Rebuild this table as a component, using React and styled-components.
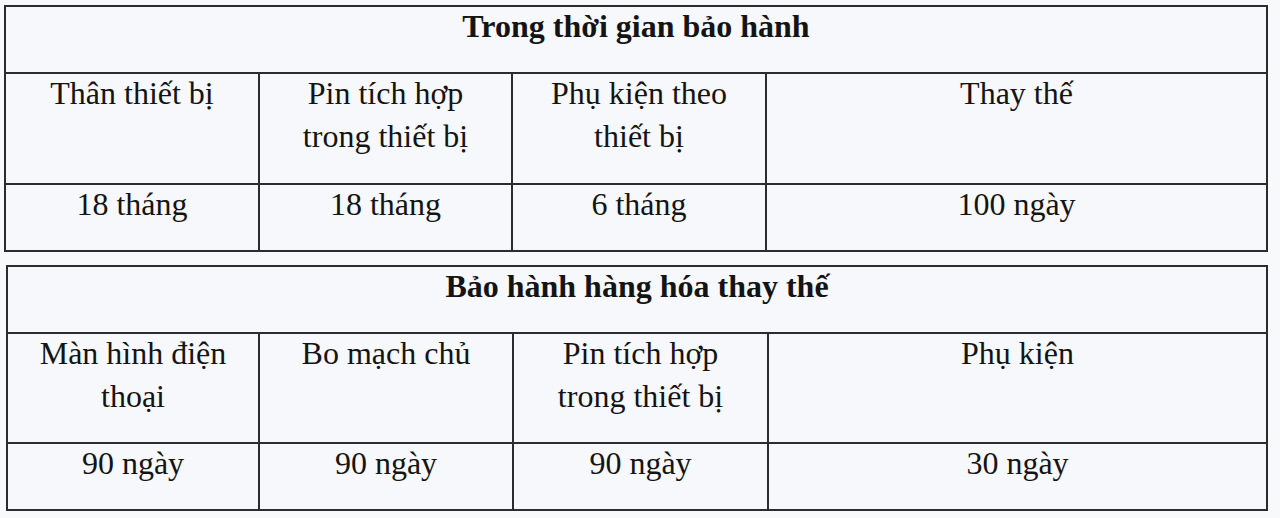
import React from "react";
import styled, { createGlobalStyle } from "styled-components";

const Global = createGlobalStyle`
  html, body {
    margin: 0;
    padding: 0;
    background: #f8f9fb;
  }
  body {
    font-family: "Liberation Serif", "Times New Roman", serif;
    color: #141414;
  }
`;

const Page = styled.div`
  width: 1280px;
  height: 518px;
  padding-top: 5px;
  box-sizing: border-box;
  display: flex;
  flex-direction: column;
  gap: 13px;
  overflow: hidden;
`;

const Table = styled.div`
  margin-left: ${(p) => p.$left}px;
  width: ${(p) => 1268 - p.$left}px;
  box-sizing: border-box;
  display: grid;
  grid-template-columns: ${(p) => p.$cols};
  grid-template-rows: 65px ${(p) => p.$mid}px 65px;
  gap: 2px;
  padding: 2px;
  background: #2c2c2e;
`;

const Cell = styled.div`
  background: #f7f8fb;
  text-align: center;
  font-size: 32px;
  line-height: 43px;
  font-weight: ${(p) => (p.$head ? 700 : 400)};
  grid-column: ${(p) => (p.$head ? "1 / -1" : "auto")};
  overflow: hidden;
`;

const Label = styled.div`
  margin-top: -2px;
`;

function DataTable({ left, cols, mid, title, heads, values }) {
  return (
    <Table $left={left} $cols={cols} $mid={mid}>
      <Cell $head>
        <Label>{title}</Label>
      </Cell>
      {heads.map((h, i) => (
        <Cell key={"h" + i}>
          <Label>
            {h.map((line, j) => (
              <React.Fragment key={j}>
                {j > 0 && <br />}
                {line}
              </React.Fragment>
            ))}
          </Label>
        </Cell>
      ))}
      {values.map((v, i) => (
        <Cell key={"v" + i}>
          <Label>{v}</Label>
        </Cell>
      ))}
    </Table>
  );
}

export default function App() {
  return (
    <>
      <Global />
      <Page>
        <DataTable
          left={4}
          cols="252px 251px 252px 1fr"
          mid={109}
          title="Trong thời gian bảo hành"
          heads={[
            ["Thân thiết bị"],
            ["Pin tích hợp", "trong thiết bị"],
            ["Phụ kiện theo", "thiết bị"],
            ["Thay thế"],
          ]}
          values={["18 tháng", "18 tháng", "6 tháng", "100 ngày"]}
        />
        <DataTable
          left={6}
          cols="250px 252px 253px 1fr"
          mid={108}
          title="Bảo hành hàng hóa thay thế"
          heads={[
            ["Màn hình điện", "thoại"],
            ["Bo mạch chủ"],
            ["Pin tích hợp", "trong thiết bị"],
            ["Phụ kiện"],
          ]}
          values={["90 ngày", "90 ngày", "90 ngày", "30 ngày"]}
        />
      </Page>
    </>
  );
}
